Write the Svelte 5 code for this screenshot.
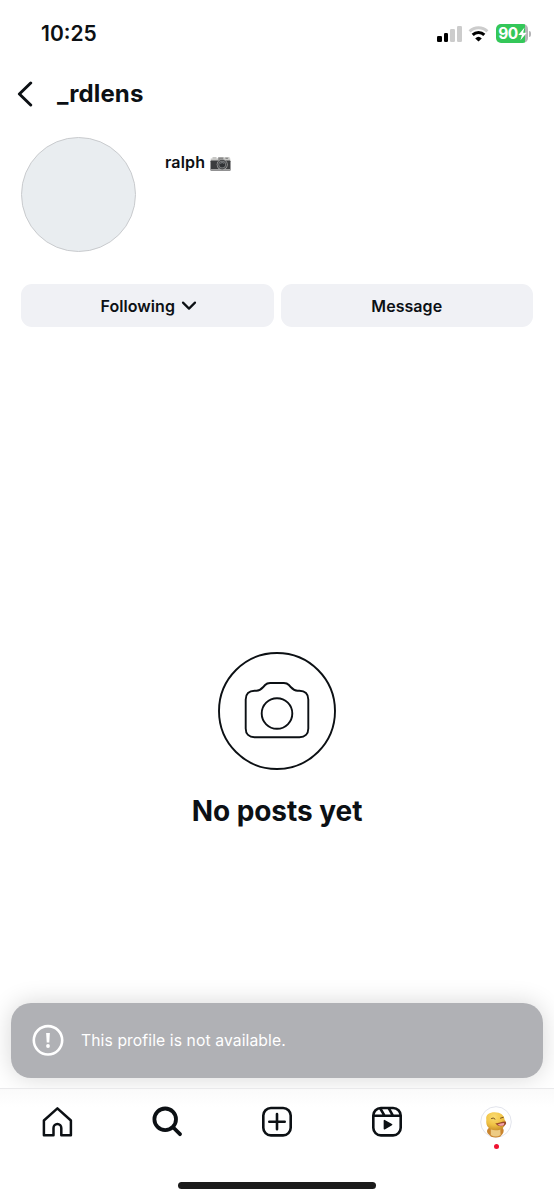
<script lang="ts">
	// Profile screen for an account with no posts, with the "not available" toast
	// floating above the tab bar.

	let {
		username = '_rdlens',
		displayName = 'ralph',
		toast = 'This profile is not available.'
	}: {
		username?: string;
		displayName?: string;
		toast?: string;
	} = $props();

	let following = $state(true);

	const bars = [
		{ height: 6, on: true },
		{ height: 9, on: true },
		{ height: 13, on: false },
		{ height: 16, on: false }
	];
</script>

<div class="screen">
	<header class="status">
		<span class="time">10:25</span>
		<div class="indicators">
			<div class="signal">
				{#each bars as bar}
					<i class:on={bar.on} style:height="{bar.height}px"></i>
				{/each}
			</div>
			<svg class="wifi" viewBox="0 0 21 16" width="21" height="16" aria-hidden="true">
				<path d="M1.6 5.4a12.8 12.8 0 0 1 17.8 0" fill="none" stroke="#ccc" stroke-width="3" />
				<path d="M4.7 8.9a8.3 8.3 0 0 1 11.6 0" fill="none" stroke="#000" stroke-width="3" />
				<path d="M7.2 12.4a4.8 4.8 0 0 1 6.6 0L10.5 15.6z" fill="#000" />
			</svg>
			<div class="battery">
				<span>90</span>
				<svg viewBox="0 0 9 14" width="9" height="14" aria-hidden="true">
					<path d="M6.5 0.5L0.3 8h3.6L2.4 13.3 8.8 5.7H5.1z" fill="#fff" />
				</svg>
			</div>
			<i class="nub"></i>
		</div>
	</header>

	<div class="topbar">
		<button class="back" type="button" aria-label="Back">
			<svg viewBox="0 0 16 26" width="16" height="26">
				<path d="M13.7 2L2.4 13l11.3 11" fill="none" stroke="currentColor" stroke-width="3" stroke-linecap="round" stroke-linejoin="round" />
			</svg>
		</button>
		<h1>{username}</h1>
	</div>

	<section class="profile">
		<div class="avatar"></div>
		<div class="name">
			<span>{displayName}</span>
			<svg viewBox="0 0 21 16" width="21" height="16" role="img" aria-label="camera">
				<path d="M1.5 2.4h1V1h4v1.4h1L8.5 1h5l1 1V1h5v1.5h.8v3H.7v-3z" fill="#c6c6c4" />
				<path d="M8.3 1.5h5v3h-5zM15.5 1.8h2.4v1.2h-2.4z" fill="#888" />
				<rect x=".5" y="4.6" width="20" height="10.2" rx=".7" fill="#3c3d3f" />
				<path d="M.7 13.1h19.6v1.5H.7z" fill="#aaa" />
				<circle cx="12.2" cy="8.6" r="5.5" fill="#aaa" />
				<circle cx="12.2" cy="8.6" r="4.9" fill="#4b4c4e" />
				<circle cx="12.2" cy="8.6" r="3.7" fill="#818384" />
				<circle cx="12.2" cy="8.6" r="2.9" fill="#303235" />
				<path d="M10.2 7.3q2-1.5 4 0" fill="none" stroke="#85888c" />
			</svg>
		</div>
	</section>

	<div class="actions">
		<button type="button" onclick={() => (following = !following)}>
			<span>{following ? 'Following' : 'Follow'}</span>
			<svg viewBox="0 0 16 10" width="16" height="10" aria-hidden="true">
				<path d="M2 1.6l6 6 6-6" fill="none" stroke="currentColor" stroke-width="2.2" stroke-linecap="round" stroke-linejoin="round" />
			</svg>
		</button>
		<button type="button"><span>Message</span></button>
	</div>

	<main class="empty">
		<svg viewBox="0 0 118 118" width="118" height="118" fill="none" stroke="currentColor" stroke-width="1.9" aria-hidden="true">
			<circle cx="59" cy="59" r="58" />
			<path d="M36.5 38.700h2c3 0 4.800-1.500 6.800-3.700l1.800-2c1.400-1.500 3-2 5-2h13.800c2 0 3.600.5 5 2l1.800 2c2 2.200 3.800 3.700 6.800 3.700h2c5.500 0 8.800 3.300 8.800 8.700v29c0 5.500-3.300 8.800-8.800 8.800h-45c-5.500 0-8.800-3.300-8.800-8.800v-29c0-5.400 3.300-8.700 8.800-8.700z" />
			<circle cx="59" cy="61.500" r="15.300" />
		</svg>
		<h2>No posts yet</h2>
	</main>

	<div class="toast" role="status">
		<svg viewBox="0 0 32 32" width="32" height="32" aria-hidden="true">
			<circle cx="16" cy="16.3" r="14.2" fill="none" stroke="#fff" stroke-width="2.6" />
			<path d="M14.1 9h3.8l-.6 9.600h-2.600z" fill="#fff" />
			<circle cx="16" cy="22" r="1.9" fill="#fff" />
		</svg>
		<span>{toast}</span>
	</div>

	<nav class="tabs">
		<button type="button" aria-label="Home">
			<svg viewBox="0 0 32 32" width="32" height="32" fill="none" stroke="currentColor" stroke-width="2.5" stroke-linejoin="round">
				<path d="M19.3 29.300V22a3.900 3.900 0 0 0-7.800 0v7.300H1.900V14.500L15.400 2.400 28.900 14.500v14.800z" />
			</svg>
		</button>
		<button type="button" aria-label="Search">
			<svg viewBox="0 0 32 32" width="32" height="32" fill="none" stroke="currentColor" stroke-linecap="round">
				<circle cx="14.2" cy="13.3" r="10.8" stroke-width="3.8" />
				<path d="M22.3 21.5l6.7 6.7" stroke-width="3.8" />
			</svg>
		</button>
		<button type="button" aria-label="New post">
			<svg viewBox="0 0 32 32" width="32" height="32" fill="none" stroke="currentColor" stroke-width="2.6" stroke-linecap="round">
				<rect x="2.3" y="2" width="27.4" height="27.4" rx="7.6" />
				<path d="M16 8.1v15.2M8.3 15.7h15.4" />
			</svg>
		</button>
		<button type="button" aria-label="Reels">
			<svg viewBox="0 0 32 32" width="32" height="32" fill="none" stroke="currentColor" stroke-width="2.6" stroke-linejoin="round">
				<rect x="2.3" y="2" width="27.4" height="27.4" rx="7.6" />
				<path d="M2.3 9.7h27.4M9.3 2.500l4.200 7.200M17.700 2.200l4.200 7.500" />
				<path d="M13.400 14.600v8.200l7.200-4.100z" fill="currentColor" stroke-width="1.500" />
			</svg>
		</button>
		<button type="button" aria-label="Profile">
			<svg viewBox="0 0 32 32" width="32" height="32">
				<defs>
					<radialGradient id="face" cx=".4" cy=".25" r=".75">
						<stop offset="0" stop-color="#fbdc71" />
						<stop offset=".6" stop-color="#f0c244" />
						<stop offset="1" stop-color="#cd932b" />
					</radialGradient>
				</defs>
				<circle cx="16" cy="16" r="15.3" fill="#fff" stroke="#e2e4ec" />
				<path d="M8.8 22C6.600 23.500 6.500 26.500 8.400 28l2.800 2.700q4.500 1.500 9 0l2.300-2.700c1.700-2 1.500-5-.3-6.500z" fill="#c9852f" />
				<path d="M10.800 23h9.500l.3 6q-5 3-9.800 0z" fill="#edcb83" />
				<path d="M6.300 13.700C5.500 8.500 9.500 6.300 14.600 6.300c6 0 9.700 3 10 7.600 1.600 1.300 1.800 3.200.4 4.700-1.200 4.400-5.500 6-9.800 5.700-6-.4-9.700-4-8.900-10.600z" fill="url(#face)" />
				<path d="M15.300 17c3.800.8 6-1.400 9.200-1.400 2.600 0 1.900 3.600-.5 4.200-3.700 1-6.900.3-8.700-2.800z" fill="#9a4a2a" />
				<path d="M17.600 18.600q3.300-1.800 6.600-1.600c.6 3.200-4 3.700-6.600 1.600z" fill="#f4a3a8" />
				<path d="M11.500 12.400q1.800-1.300 3.500.6M20.500 12.200l2.800-.9" fill="none" stroke="#765120" stroke-linecap="round" />
			</svg>
			<i class="dot"></i>
		</button>
	</nav>

	<div class="home-indicator"></div>
</div>

<style>
	:global(body) { margin: 0; background: #fff; }

	.screen {
		width: 554px;
		height: 1200px;
		display: flex;
		flex-direction: column;
		overflow: hidden;
		background: #fff;
		color: #0c1014;
		font-family: Inter, sans-serif;
	}

	button {
		padding: 0;
		border: none;
		background: none;
		color: inherit;
		font-family: inherit;
		cursor: pointer;
	}
	svg { display: block; flex: none; }
	h1, h2 { margin: 0; font-weight: 700; }

	.status {
		box-sizing: border-box;
		height: 67px;
		padding: 0 23px 0 41px;
		display: flex;
		align-items: center;
		justify-content: space-between;
	}
	.time { font-size: 21px; font-weight: 600; }
	.indicators { display: flex; align-items: center; }
	.signal { display: flex; align-items: flex-end; gap: 2px; height: 16px; margin-right: 6px; }
	.signal i { width: 4.8px; border-radius: 1.3px; background: #ccc; }
	.signal i.on { background: #000; }
	.wifi { margin-right: 7px; }
	.battery {
		width: 32px;
		height: 19px;
		display: flex;
		align-items: center;
		justify-content: center;
		border-radius: 5px;
		background: linear-gradient(90deg, #34c759 29px, #b5b5b7 29px);
		color: #fff;
		font-size: 15.5px;
		font-weight: 700;
		letter-spacing: -0.5px;
	}
	.battery span { padding-left: 1px; }
	.nub { width: 2px; height: 6px; margin-left: 1px; border-radius: 0 2px 2px 0; background: #b5b5b7; }

	.topbar { height: 54px; padding-left: 17px; display: flex; align-items: center; }
	.back { width: 40px; }
	h1 { font-size: 24px; line-height: 32px; letter-spacing: 0.1px; }

	.profile { display: flex; height: 147px; padding: 16px 21px 0; box-sizing: border-box; gap: 29px; }
	.avatar {
		box-sizing: border-box;
		width: 115px;
		height: 115px;
		border: 1px solid #c9cbce;
		border-radius: 50%;
		background: #e9edf0;
	}
	.name {
		display: flex;
		align-items: center;
		gap: 5px;
		height: 24px;
		padding-top: 13px;
		font-size: 16px;
		font-weight: 600;
		letter-spacing: 0.15px;
	}
	.name svg { margin-top: 3px; }

	.actions { display: grid; grid-template-columns: 1fr 1fr; gap: 7px; padding: 16px 21px 0; }
	.actions button {
		display: flex;
		align-items: center;
		justify-content: center;
		gap: 6px;
		height: 43px;
		border-radius: 11px;
		background: #f0f1f5;
		font-size: 16px;
		font-weight: 600;
	}
	.actions span { letter-spacing: 0.05px; }
	.actions button:first-child { padding-left: 3px; }

	.empty {
		flex: 1;
		display: flex;
		flex-direction: column;
		align-items: center;
		padding-top: 325px;
	}
	h2 { margin-top: 24px; font-size: 28px; line-height: 34px; letter-spacing: -0.05px; }

	.toast {
		box-sizing: border-box;
		display: flex;
		align-items: center;
		gap: 17px;
		height: 75px;
		margin: 0 11px 10px;
		padding: 0 21px 1px;
		border-radius: 20px;
		background: #b0b1b5;
		box-shadow: 0 0 25px rgba(0, 0, 0, 0.16);
		color: #fff;
		font-size: 15.7px;
		letter-spacing: 0.1px;
	}

	.tabs {
		position: relative;
		box-sizing: border-box;
		display: grid;
		grid-template-columns: repeat(5, 1fr);
		height: 94px;
		padding: 17px 3px 0;
		border-top: 1px solid #e9e9eb;
		background: linear-gradient(#fafafa, #fff 18px);
	}
	.tabs button { display: flex; flex-direction: column; align-items: center; }
	.dot { width: 5px; height: 5px; margin-top: 6px; border-radius: 50%; background: #ef1230; }

	.home-indicator { width: 198px; height: 7px; margin: 0 auto 11px; border-radius: 4px; background: #1b1b1b; }
</style>
